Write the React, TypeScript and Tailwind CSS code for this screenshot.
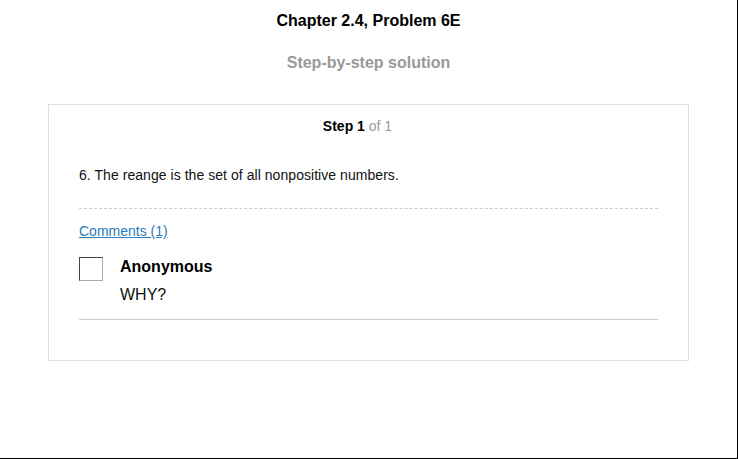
import React from "react";

export default function App() {
  return (
    <div
      className="w-[738px] h-[459px] bg-white border-r border-b border-black box-border text-black"
      style={{ fontFamily: '"Liberation Sans", Arial, sans-serif' }}
    >
      <div className="pt-[12px] text-center text-[16px] font-bold leading-[18px]">
        Chapter 2.4, Problem 6E
      </div>
      <div className="mt-[24px] text-center text-[16px] font-bold leading-[18px] text-[#999999]">
        Step-by-step solution
      </div>
      <div className="mx-auto mt-[32px] w-[641px] h-[257px] border border-[#dddddd] box-border px-[30px] pt-[11px]">
        <div className="pr-[22px] text-center text-[14px] leading-[20px]">
          <span className="font-bold">Step 1</span>
          <span className="text-[#999999]"> of 1</span>
        </div>
        <div className="mt-[29px] text-[14px] leading-[20px] tracking-[0.05px] text-[#111111]">
          6. The reange is the set of all nonpositive numbers.
        </div>
        <div className="mt-[23px] border-t border-dashed border-[#cccccc]" />
        <div className="mt-[12px] text-[14px] leading-[20px]">
          <a href="#" className="text-[#2b7bb9] underline">
            Comments (1)
          </a>
        </div>
        <div className="mt-[15px] flex gap-[17px]">
          <div className="mt-[1px] w-[24px] h-[24px] shrink-0 border border-t-[#444444] border-l-[#444444] border-r-[#aaaaaa] border-b-[#aaaaaa] box-border" />
          <div className="pt-[1px]">
            <div className="text-[16px] font-bold leading-[20px]">Anonymous</div>
            <div className="mt-[8px] text-[16px] leading-[20px] text-[#111111]">WHY?</div>
          </div>
        </div>
        <div className="mt-[14px] border-t border-[#cccccc]" />
      </div>
    </div>
  );
}
